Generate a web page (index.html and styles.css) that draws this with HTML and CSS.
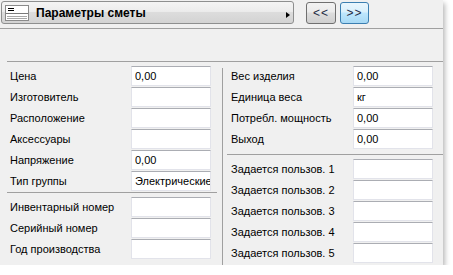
FILE: index.html
```html
<!DOCTYPE html>
<html lang="ru">
<head>
    <meta charset="UTF-8">
    <title>Параметры сметы</title>
    <link rel="stylesheet" href="styles.css">
</head>
<body>
    <div class="panel">
        <div class="toolbar">
            <div class="title-bar">
                <svg class="title-icon" width="24" height="16" viewBox="0 0 24 16">
                    <rect x="0.5" y="0.5" width="23" height="15" fill="#fff" stroke="#8a8a8a"/>
                    <line x1="3" y1="3.5" x2="9" y2="3.5" stroke="#000"/>
                    <line x1="3" y1="5.5" x2="9" y2="5.5" stroke="#000"/>
                    <line x1="1" y1="8.5" x2="23" y2="8.5" stroke="#7a7a7a"/>
                    <line x1="2" y1="11.5" x2="22" y2="11.5" stroke="#a8a8a8"/>
                    <line x1="2" y1="13.5" x2="22" y2="13.5" stroke="#a8a8a8"/>
                </svg>
                <span class="title-text">Параметры сметы</span>
                <span class="title-arrow"></span>
            </div>
            <button class="nav-btn prev">&lt;&lt;</button>
            <button class="nav-btn next">&gt;&gt;</button>
        </div>

        <div class="columns">
            <div class="col col-left">
                <div class="group">
                    <div class="row"><label>Цена</label><input type="text" value="0,00"></div>
                    <div class="row"><label>Изготовитель</label><input type="text"></div>
                    <div class="row"><label>Расположение</label><input type="text"></div>
                    <div class="row"><label>Аксессуары</label><input type="text"></div>
                    <div class="row"><label>Напряжение</label><input type="text" value="0,00"></div>
                    <div class="row"><label>Тип группы</label><input type="text" value="Электрические"></div>
                </div>
                <div class="group group-sep">
                    <div class="row"><label>Инвентарный номер</label><input type="text"></div>
                    <div class="row"><label>Серийный номер</label><input type="text"></div>
                    <div class="row"><label>Год производства</label><input type="text"></div>
                </div>
            </div>
            <div class="col col-right">
                <div class="group">
                    <div class="row"><label>Вес изделия</label><input type="text" value="0,00"></div>
                    <div class="row"><label>Единица веса</label><input type="text" value="кг"></div>
                    <div class="row"><label>Потребл. мощность</label><input type="text" value="0,00"></div>
                    <div class="row"><label>Выход</label><input type="text" value="0,00"></div>
                </div>
                <div class="group group-sep">
                    <div class="row"><label>Задается пользов. 1</label><input type="text"></div>
                    <div class="row"><label>Задается пользов. 2</label><input type="text"></div>
                    <div class="row"><label>Задается пользов. 3</label><input type="text"></div>
                    <div class="row"><label>Задается пользов. 4</label><input type="text"></div>
                    <div class="row"><label>Задается пользов. 5</label><input type="text"></div>
                </div>
            </div>
        </div>
    </div>
</body>
</html>
```

FILE: styles.css
```css
body {
    margin: 0;
    background-color: #fff;
    font-family: "Liberation Sans", Arial, sans-serif;
    font-size: 11px;
    color: #000;
}
.panel {
    width: 443px;
    height: 265px;
    background-color: #f0f0f0;
    box-shadow: 2px 3px 5px rgba(0, 0, 0, 0.28);
    overflow: hidden;
}
.toolbar {
    box-sizing: border-box;
    height: 29px;
    padding: 1px 0 0 1px;
    display: flex;
    align-items: flex-start;
    border-bottom: 1px solid #a0a0a0;
}
.title-bar {
    box-sizing: border-box;
    width: 293px;
    height: 23px;
    border: 1px solid #8e8f8f;
    border-radius: 3px;
    background: linear-gradient(#f4f4f4 0%, #ececec 45%, #dcdcdc 50%, #d3d3d3 100%);
    display: flex;
    align-items: center;
    padding-left: 3px;
}
.title-icon {
    display: block;
    flex: none;
}
.title-text {
    margin-left: 7px;
    font-size: 12px;
    font-weight: bold;
    flex: 1;
}
.title-arrow {
    width: 0;
    height: 0;
    border-top: 3px solid transparent;
    border-bottom: 3px solid transparent;
    border-left: 4px solid #000;
    margin: 4px 3px 0 0;
}
.nav-btn {
    box-sizing: border-box;
    height: 22px;
    margin-top: 1px;
    padding: 0 0 1px;
    border: 1px solid #707070;
    border-radius: 3px;
    background: linear-gradient(#f2f2f2 0%, #ebebeb 45%, #dddddd 50%, #cfcfcf 100%);
    font-family: "Liberation Sans", Arial, sans-serif;
    font-size: 12px;
    color: #1e2a44;
    letter-spacing: 1px;
}
.prev {
    width: 30px;
    margin-left: 12px;
}
.next {
    width: 29px;
    margin-left: 4px;
    border-color: #3c7fb1;
    background: linear-gradient(#eaf6fd 0%, #d9f0fc 45%, #bee6fd 50%, #a7d9f5 100%);
}
.columns {
    display: flex;
    margin: 32px 0 0 7px;
    border-top: 1px solid #a0a0a0;
    height: 203px;
}
.col-left {
    width: 215px;
}
.col-right {
    flex: 1;
    margin-top: 6px;
    border-left: 1px solid #a0a0a0;
}
.group {
    display: flex;
    flex-direction: column;
    gap: 1px;
    padding-top: 4px;
}
.col-right .group:first-child {
    padding-top: 0;
    margin-top: -2px;
}
.col-left .group-sep {
    margin: 1px 5px 0 0;
    border-top: 1px solid #a0a0a0;
}
.col-right .group-sep {
    margin: 5px 0 0 4px;
    border-top: 1px solid #a0a0a0;
}
.row {
    display: flex;
    align-items: center;
    justify-content: space-between;
    height: 20px;
}
.col-left .row {
    padding: 0 11px 0 3px;
}
.col-left .group-sep .row {
    padding-right: 6px;
}
.col-right .row {
    padding: 0 10px 0 8px;
}
.col-right .group-sep .row {
    padding-left: 4px;
}
.row input {
    box-sizing: border-box;
    width: 80px;
    height: 20px;
    margin: 0;
    padding: 0 0 0 3px;
    border: 1px solid #e2e3ea;
    border-top-color: #abadb3;
    background-color: #fff;
    font-family: "Liberation Sans", Arial, sans-serif;
    font-size: 11px;
    color: #000;
    outline: none;
}
```
